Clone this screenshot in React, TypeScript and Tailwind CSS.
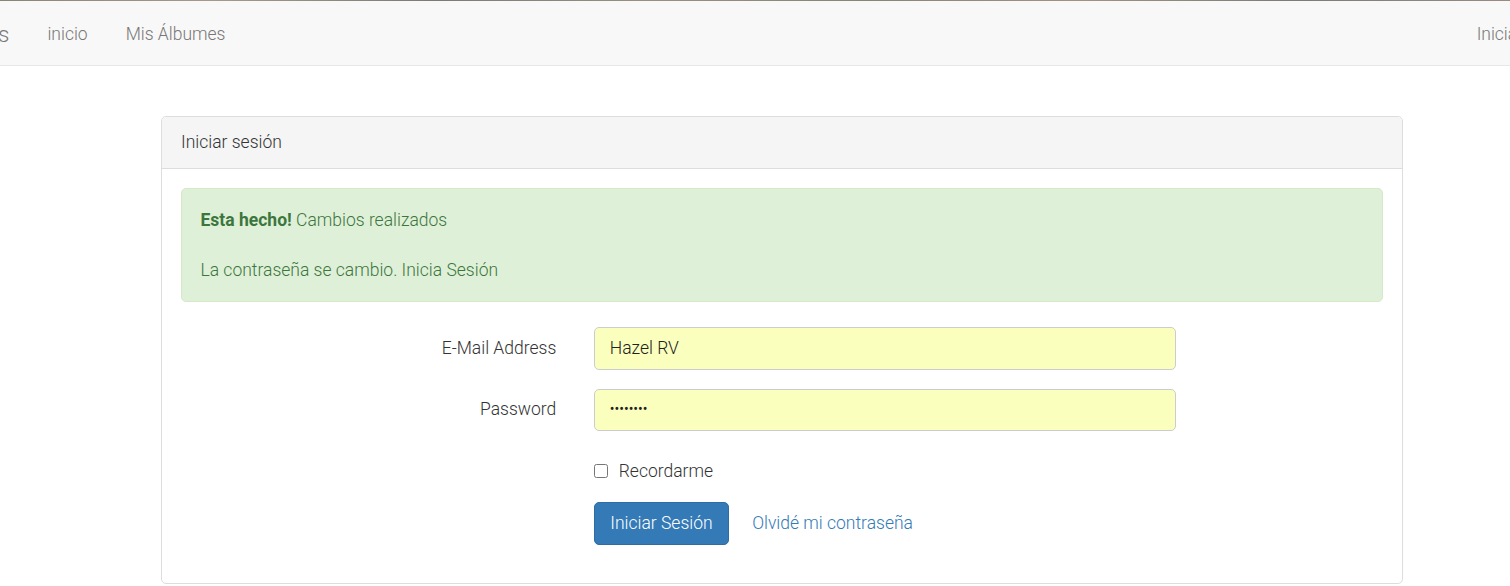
import React from "react";

export default function App() {
  return (
    <div className="min-h-[586px] bg-white font-['Roboto',sans-serif] text-[17.5px] font-light leading-[25px] text-[#333]">
      <div className="h-px bg-[linear-gradient(90deg,#8c8377,#a59a8a,#7d7a73,#9a8f83,#8a8376,#a09380,#7e7b76,#988b82)]" />
      <nav className="flex h-[65px] items-center overflow-hidden whitespace-nowrap border-b border-[#e7e7e7] bg-[#f8f8f8] pt-[3px] text-[#777]">
        <span className="-ml-[2px] mr-[38px] text-[22.5px]">s</span>
        <a className="mr-[38px]">inicio</a>
        <a>Mis Álbumes</a>
        <a className="ml-auto mr-[-69px]">Iniciar Sesión</a>
      </nav>

      <div className="pl-[161px] pt-[50px]">
        <div className="w-[1242px] rounded-[5px] border border-[#ddd] bg-white">
          <div className="rounded-t-[5px] border-b border-[#ddd] bg-[#f5f5f5] px-[19px] py-[13px]">
            Iniciar sesión
          </div>
          <div className="p-[18.75px]">
            <div className="mb-[25px] rounded-[5px] border border-[#d6e9c6] bg-[#dff0d8] p-[18.75px] text-[#3c763d]">
              <strong className="font-bold">Esta hecho!</strong> Cambios realizados
              <br />
              <br />
              La contraseña se cambio. Inicia Sesión
            </div>

            <div className="mb-[18.75px] flex">
              <label className="mr-[37.5px] w-[375.5px] pt-[8.75px] text-right">E-Mail Address</label>
              <div className="flex h-[42.5px] w-[582px] items-center rounded-[5px] border border-[#ccc] bg-[#faffbd] px-[15px] text-[#222]">
                Hazel RV
              </div>
            </div>

            <div className="mb-[18.75px] flex">
              <label className="mr-[37.5px] w-[375.5px] pt-[8.75px] text-right">Password</label>
              <div className="flex h-[42.5px] w-[582px] items-center rounded-[5px] border border-[#ccc] bg-[#faffbd] px-[15px] text-[14px] font-normal text-[#222]">
                ••••••••
              </div>
            </div>

            <div className="mb-[18.75px] flex">
              <div className="ml-[413px] flex items-center pt-[8.75px]">
                <input type="checkbox" className="m-0 h-[14px] w-[14px]" />
                <span className="ml-[11px]">Recordarme</span>
              </div>
            </div>

            <div className="mb-[18.75px] flex items-center">
              <div className="ml-[413px] flex items-center">
                <button className="h-[43px] rounded-[5px] border border-[#2e6da4] bg-[#337ab7] px-[15.5px] font-light text-white">
                  Iniciar Sesión
                </button>
                <a className="ml-[23px] text-[#337ab7]">Olvidé mi contraseña</a>
              </div>
            </div>
          </div>
        </div>
      </div>
    </div>
  );
}
